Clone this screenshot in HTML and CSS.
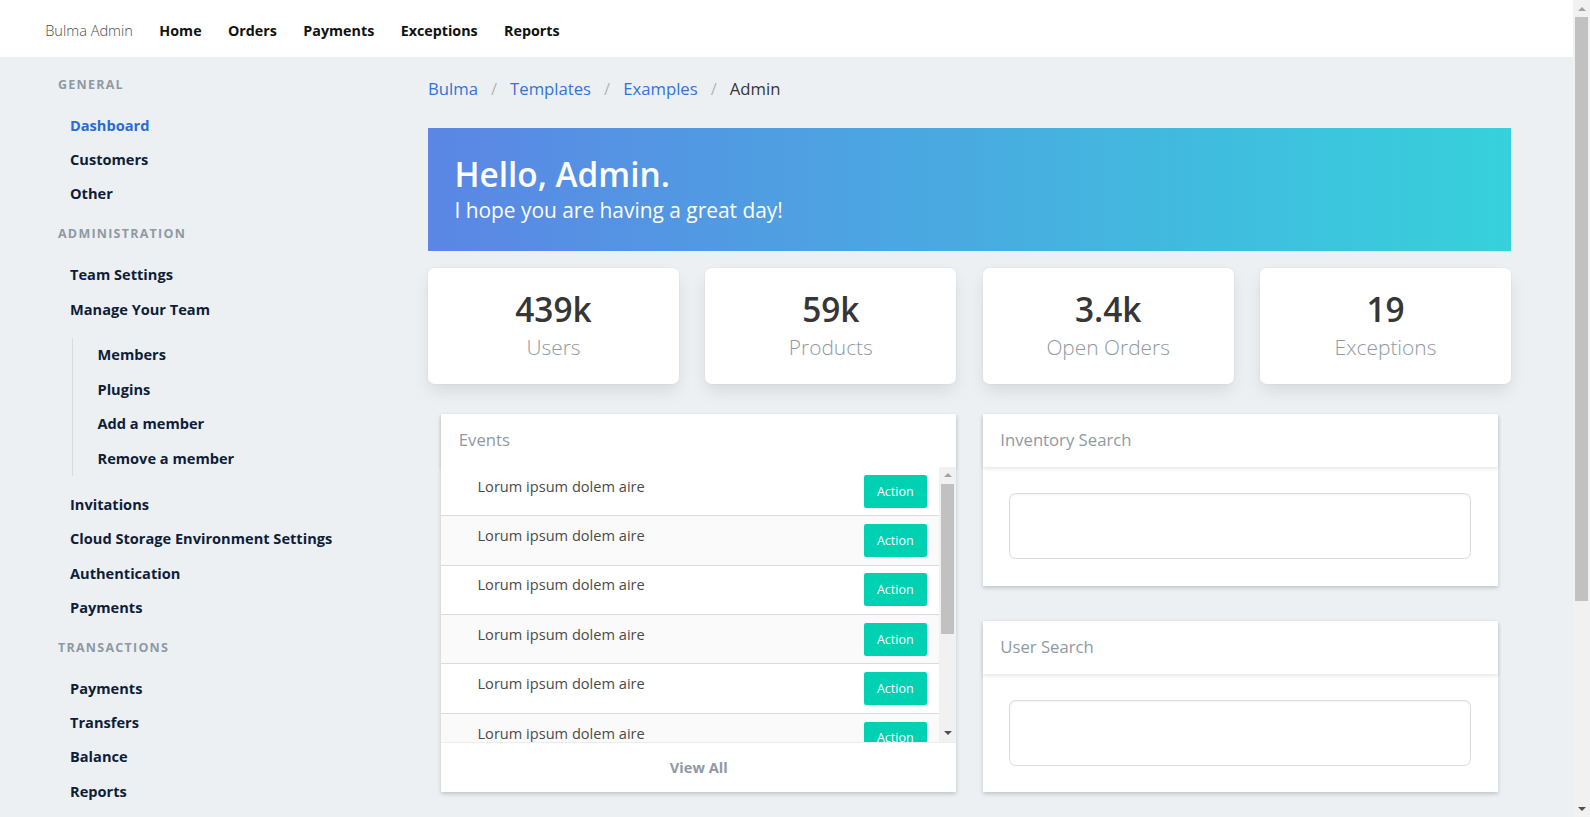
FILE: index.html
```html
<!DOCTYPE html>
<html lang="en">
<head>
    <meta charset="UTF-8">
    <meta name="viewport" content="width=device-width, initial-scale=1.0">
    <title>Bulma Admin</title>
    <link rel="stylesheet" href="styles.css">
</head>
<body>
    <nav class="navbar">
        <a class="navbar-item brand-text" href="#">Bulma Admin</a>
        <a class="navbar-item" href="#">Home</a>
        <a class="navbar-item" href="#">Orders</a>
        <a class="navbar-item" href="#">Payments</a>
        <a class="navbar-item" href="#">Exceptions</a>
        <a class="navbar-item" href="#">Reports</a>
    </nav>

    <div class="layout">
        <aside class="menu">
            <p class="menu-label">General</p>
            <ul class="menu-list">
                <li><a class="is-active" href="#">Dashboard</a></li>
                <li><a href="#">Customers</a></li>
                <li><a href="#">Other</a></li>
            </ul>
            <p class="menu-label">Administration</p>
            <ul class="menu-list">
                <li><a href="#">Team Settings</a></li>
                <li>
                    <a href="#">Manage Your Team</a>
                    <ul class="sub-list">
                        <li><a href="#">Members</a></li>
                        <li><a href="#">Plugins</a></li>
                        <li><a href="#">Add a member</a></li>
                        <li><a href="#">Remove a member</a></li>
                    </ul>
                </li>
                <li><a href="#">Invitations</a></li>
                <li><a href="#">Cloud Storage Environment Settings</a></li>
                <li><a href="#">Authentication</a></li>
                <li><a href="#">Payments</a></li>
            </ul>
            <p class="menu-label">Transactions</p>
            <ul class="menu-list">
                <li><a href="#">Payments</a></li>
                <li><a href="#">Transfers</a></li>
                <li><a href="#">Balance</a></li>
                <li><a href="#">Reports</a></li>
            </ul>
        </aside>

        <main class="main">
            <nav class="breadcrumb">
                <a href="#">Bulma</a>
                <span class="sep">/</span>
                <a href="#">Templates</a>
                <span class="sep">/</span>
                <a href="#">Examples</a>
                <span class="sep">/</span>
                <span class="current">Admin</span>
            </nav>

            <section class="hero">
                <h1 class="hero-title">Hello, Admin.</h1>
                <h2 class="hero-subtitle">I hope you are having a great day!</h2>
            </section>

            <section class="info-tiles">
                <article class="tile">
                    <p class="tile-title">439k</p>
                    <p class="tile-subtitle">Users</p>
                </article>
                <article class="tile">
                    <p class="tile-title">59k</p>
                    <p class="tile-subtitle">Products</p>
                </article>
                <article class="tile">
                    <p class="tile-title">3.4k</p>
                    <p class="tile-subtitle">Open Orders</p>
                </article>
                <article class="tile">
                    <p class="tile-title">19</p>
                    <p class="tile-subtitle">Exceptions</p>
                </article>
            </section>

            <div class="panels">
                <div class="panel-col">
                    <div class="card events-card">
                        <header class="card-header">Events</header>
                        <div class="card-table">
                            <div class="event-list">
                                <div class="event-row"><span>Lorum ipsum dolem aire</span><a class="button" href="#">Action</a></div>
                                <div class="event-row"><span>Lorum ipsum dolem aire</span><a class="button" href="#">Action</a></div>
                                <div class="event-row"><span>Lorum ipsum dolem aire</span><a class="button" href="#">Action</a></div>
                                <div class="event-row"><span>Lorum ipsum dolem aire</span><a class="button" href="#">Action</a></div>
                                <div class="event-row"><span>Lorum ipsum dolem aire</span><a class="button" href="#">Action</a></div>
                                <div class="event-row"><span>Lorum ipsum dolem aire</span><a class="button" href="#">Action</a></div>
                                <div class="event-row"><span>Lorum ipsum dolem aire</span><a class="button" href="#">Action</a></div>
                                <div class="event-row"><span>Lorum ipsum dolem aire</span><a class="button" href="#">Action</a></div>
                                <div class="event-row"><span>Lorum ipsum dolem aire</span><a class="button" href="#">Action</a></div>
                            </div>
                            <div class="scrollbar">
                                <span class="scroll-arrow up"></span>
                                <span class="scroll-thumb"></span>
                                <span class="scroll-track"></span>
                                <span class="scroll-arrow down"></span>
                            </div>
                        </div>
                        <footer class="card-footer"><a href="#">View All</a></footer>
                    </div>
                </div>
                <div class="panel-col">
                    <div class="card">
                        <header class="card-header">Inventory Search</header>
                        <div class="card-content">
                            <input class="input" type="text">
                        </div>
                    </div>
                    <div class="card">
                        <header class="card-header">User Search</header>
                        <div class="card-content">
                            <input class="input" type="text">
                        </div>
                    </div>
                </div>
            </div>
        </main>
    </div>

    <div class="page-scrollbar scrollbar">
        <span class="scroll-arrow up"></span>
        <span class="scroll-thumb"></span>
        <span class="scroll-track"></span>
        <span class="scroll-arrow down"></span>
    </div>
</body>
</html>
```

FILE: styles.css
```css
* {
    box-sizing: border-box;
}

body {
    margin: 0;
    background: #ecf0f3;
    font-family: "Open Sans", "Noto Sans", sans-serif;
    color: #4a4a4a;
}

a {
    text-decoration: none;
}

ul {
    list-style: none;
    margin: 0;
    padding: 0;
}

/* top bar */
.navbar {
    display: flex;
    align-items: stretch;
    height: 57px;
    padding-left: 32px;
    background: white;
}

.navbar-item {
    display: flex;
    align-items: center;
    padding: 3px 13.2px 0;
    font-size: 14.3px;
    font-weight: 700;
    color: #111;
}

.navbar-item.brand-text {
    font-size: 14.6px;
    font-weight: 300;
    color: #4a4a4a;
}

.layout {
    display: flex;
    padding: 0 79px 0 58px;
}

/* sidebar */
.menu {
    flex: 0 0 370px;
    padding-top: 18px;
}

.menu-label {
    margin: 13.2px 0;
    font-size: 12.5px;
    line-height: 19.8px;
    font-weight: 700;
    letter-spacing: 0.1em;
    text-transform: uppercase;
    color: #8f99a3;
}

.menu-label:first-child {
    margin-top: 0;
}

.menu-list a {
    display: block;
    padding: 7.6px 12px;
    font-size: 14.6px;
    line-height: 19.25px;
    font-weight: 700;
    color: #0f1d38;
}

.menu-list a.is-active {
    color: #276cda;
}

.sub-list {
    margin: 11.5px 0 11.5px 14px;
    padding-left: 12.5px;
    border-left: 1px solid #dbdbdb;
}

/* main column */
.main {
    flex: 1;
    min-width: 0;
    padding-top: 18.5px;
    padding-bottom: 20px;
}

.breadcrumb {
    display: flex;
    align-items: center;
    gap: 13px;
    margin-bottom: 26.4px;
    font-size: 16.7px;
    line-height: 26.4px;
}

.breadcrumb a {
    color: #3273dc;
}

.breadcrumb .sep {
    color: #b5b5b5;
}

.breadcrumb .current {
    color: #363636;
}

.hero {
    padding: 26.4px;
    background: #36d1dc;
    background: linear-gradient(to right, #5b86e5, #36d1dc);
    color: #fcfdfd;
}

.hero-title {
    margin: 0;
    font-size: 33.4px;
    line-height: 39.6px;
    font-weight: 600;
}

.hero-subtitle {
    margin: 3px 0 0;
    font-size: 20.9px;
    line-height: 27.5px;
    font-weight: 400;
}

.info-tiles {
    display: grid;
    grid-template-columns: repeat(4, 1fr);
    gap: 26.4px;
    margin: 17px 0 30.5px;
}

.tile {
    padding: 22px;
    background: white;
    border-radius: 6.6px;
    box-shadow: 0 8px 17px -2px rgba(10,10,10,0.1), 0 0 0 1px rgba(10,10,10,0.02);
    text-align: center;
}

.tile-title {
    margin: 0;
    font-size: 33.4px;
    line-height: 39.6px;
    font-weight: 600;
    color: #363636;
}

.tile-subtitle {
    margin: 4.4px 0 0;
    font-size: 20.9px;
    line-height: 27.5px;
    font-weight: 300;
    color: #8f99a3;
}

/* cards */
.panels {
    display: grid;
    grid-template-columns: 1fr 1fr;
    gap: 26.4px;
    padding: 0 13.2px;
}

.card {
    margin-bottom: 35.2px;
    background: white;
    box-shadow: 0 2px 4px rgba(0,0,0,0.18);
}

.card-header {
    padding: 13.2px 17.6px;
    font-size: 16.7px;
    line-height: 26.4px;
    color: #8f99a3;
    box-shadow: 0 2px 4px rgba(10,10,10,0.1);
}

.card-table {
    display: flex;
    height: 275px;
    background: white;
}

.event-list {
    flex: 1;
    overflow: hidden;
}

.event-row {
    display: flex;
    justify-content: space-between;
    align-items: flex-start;
    padding: 7.7px 12.5px 7.7px 36.3px;
    border-bottom: 1px solid #dbdbdb;
    font-size: 14.6px;
    line-height: 23.1px;
    color: #4a4a4a;
}

.event-row:nth-child(even) {
    background: #fafafa;
}

.button {
    display: inline-flex;
    align-items: center;
    height: 33px;
    padding: 0 13.2px;
    border-radius: 2.2px;
    background: #00d1b2;
    color: white;
    font-size: 12.5px;
}

.card-footer {
    padding: 13.2px;
    border-top: 1px solid #ededed;
    text-align: center;
    font-size: 14.6px;
    line-height: 23.1px;
}

.card-footer a {
    font-weight: 700;
    color: #8f99a3;
}

.card-content {
    padding: 26.4px;
}

.input {
    display: block;
    width: 100%;
    height: 66px;
    border: 1px solid #dbdbdb;
    border-radius: 6.6px;
    box-shadow: inset 0 1px 2px rgba(10,10,10,0.05);
    font-size: 25px;
    font-family: inherit;
}

/* scrollbars */
.scrollbar {
    display: flex;
    flex-direction: column;
    flex: 0 0 17px;
    width: 17px;
    background: #f1f1f1;
}

.scroll-arrow {
    flex: 0 0 17px;
    display: flex;
    align-items: center;
    justify-content: center;
}

.scroll-arrow::before {
    content: "";
    border-left: 4px solid transparent;
    border-right: 4px solid transparent;
}

.scroll-arrow.up::before {
    border-bottom: 4px solid #a3a3a3;
}

.scroll-arrow.down::before {
    border-top: 4px solid #505050;
}

.scroll-thumb {
    flex: 0 0 150px;
    margin: 0 2px;
    background: #c1c1c1;
}

.scroll-track {
    flex: 1;
}

.page-scrollbar {
    position: fixed;
    top: 0;
    right: 0;
    bottom: 0;
}

.page-scrollbar .scroll-thumb {
    flex-basis: 584px;
}
```
